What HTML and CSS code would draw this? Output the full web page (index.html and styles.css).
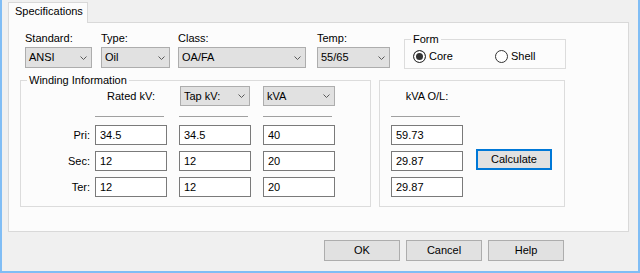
FILE: index.html
```html
<!DOCTYPE html>
<html lang="en">
<head>
  <meta charset="UTF-8">
  <title>Specifications</title>
  <link rel="stylesheet" href="styles.css">
</head>
<body>
  <div class="window">
    <div class="tabs">
      <div class="tab">Specifications</div>
    </div>

    <div class="page">
      <!-- Standard / Type / Class / Temp / Form -->
      <div class="top-row">
        <div class="field f-standard">
          <label>Standard:</label>
          <div class="combo"><span>ANSI</span><svg width="7" height="4"><polyline points="0.5,0.5 3.5,3.5 6.5,0.5"/></svg></div>
        </div>
        <div class="field f-type">
          <label>Type:</label>
          <div class="combo"><span>Oil</span><svg width="7" height="4"><polyline points="0.5,0.5 3.5,3.5 6.5,0.5"/></svg></div>
        </div>
        <div class="field f-class">
          <label>Class:</label>
          <div class="combo"><span>OA/FA</span><svg width="7" height="4"><polyline points="0.5,0.5 3.5,3.5 6.5,0.5"/></svg></div>
        </div>
        <div class="field f-temp">
          <label>Temp:</label>
          <div class="combo"><span>55/65</span><svg width="7" height="4"><polyline points="0.5,0.5 3.5,3.5 6.5,0.5"/></svg></div>
        </div>
        <fieldset class="group form-group">
          <legend>Form</legend>
          <div class="radios">
            <label class="radio core"><span class="circle checked"></span>Core</label>
            <label class="radio"><span class="circle"></span>Shell</label>
          </div>
        </fieldset>
      </div>

      <div class="lower-row">
        <!-- Winding Information -->
        <fieldset class="group winding">
          <legend>Winding Information</legend>
          <div class="grid">
            <div class="head c2">Rated kV:</div>
            <div class="combo tap"><span>Tap kV:</span><svg width="7" height="4"><polyline points="0.5,0.5 3.5,3.5 6.5,0.5"/></svg></div>
            <div class="combo kva"><span>kVA</span><svg width="7" height="4"><polyline points="0.5,0.5 3.5,3.5 6.5,0.5"/></svg></div>

            <div class="rule c2"></div>
            <div class="rule"></div>
            <div class="rule"></div>

            <div class="row-label">Pri:</div>
            <input class="tb" type="text" value="34.5">
            <input class="tb" type="text" value="34.5">
            <input class="tb" type="text" value="40">

            <div class="row-label">Sec:</div>
            <input class="tb" type="text" value="12">
            <input class="tb" type="text" value="12">
            <input class="tb" type="text" value="20">

            <div class="row-label">Ter:</div>
            <input class="tb" type="text" value="12">
            <input class="tb" type="text" value="12">
            <input class="tb" type="text" value="20">
          </div>
        </fieldset>

        <!-- Overload -->
        <fieldset class="group overload">
          <div class="grid">
            <div class="head">kVA O/L:</div>
            <div class="rule c1"></div>
            <input class="tb c1" type="text" value="59.73">
            <input class="tb c1" type="text" value="29.87">
            <input class="tb c1" type="text" value="29.87">
            <button class="btn calc" type="button">Calculate</button>
          </div>
        </fieldset>
      </div>
    </div>

    <div class="buttons">
      <button class="btn" type="button">OK</button>
      <button class="btn" type="button">Cancel</button>
      <button class="btn" type="button">Help</button>
    </div>
  </div>
</body>
</html>
```

FILE: styles.css
```css
* {
  box-sizing: border-box;
}
body {
  margin: 0;
  font-family: "Liberation Sans", Arial, sans-serif;
  font-size: 11px;
  line-height: 13px;
  color: #000;
  background: #f0f0f0;
}
.window {
  width: 640px;
  height: 273px;
  overflow: hidden;
  background: #f0f0f0;
  border: 2px solid #80bdf5;
  border-top: none;
}
.tabs {
  display: flex;
  padding: 2px 0 0 6px;
}
.tab {
  position: relative;
  width: 80px;
  height: 21px;
  margin-bottom: -1px;
  padding: 2px 0 0 6px;
  background: #fcfcfc;
  border: 1px solid #d9d9d9;
  border-bottom: none;
}
.page {
  width: 621px;
  height: 210px;
  margin-left: 6px;
  background: #fcfcfc;
  border: 1px solid #d9d9d9;
}

/* top row */
.top-row {
  display: flex;
  align-items: flex-start;
  padding: 9px 0 0 16px;
}
.field label {
  display: block;
  margin-bottom: 2px;
}
.f-standard { width: 67px; margin-right: 9px; }
.f-type { width: 69px; margin-right: 8px; }
.f-class { width: 128px; margin-right: 11px; }
.f-temp { width: 73px; margin-right: 14px; }

.combo {
  display: flex;
  align-items: center;
  justify-content: space-between;
  height: 21px;
  padding: 0 4px 0 3px;
  background: #e1e1e1;
  border: 1px solid #adadad;
}
.combo svg polyline {
  fill: none;
  stroke: #5a5a5a;
  stroke-width: 1;
}

/* group boxes */
.group {
  margin: 0;
  padding: 0;
  min-width: 0;
  border: 1px solid #dcdcdc;
}
.group legend {
  margin-left: 6px;
  padding: 1px 2px 0;
  line-height: 13px;
}
.form-group {
  width: 162px;
}
.radios {
  display: flex;
  align-items: center;
  height: 14px;
  margin: 3px 0 5px;
  padding-left: 8px;
}
.radio {
  display: flex;
  align-items: center;
}
.radio.core {
  width: 82px;
}
.circle {
  width: 13px;
  height: 13px;
  margin-right: 3px;
  border: 1px solid #333;
  border-radius: 50%;
  background: #fff;
}
.circle.checked {
  background: #333;
  box-shadow: inset 0 0 0 2px #fff;
}

/* lower row */
.lower-row {
  display: flex;
  align-items: flex-start;
  padding: 4px 0 0 11px;
}
.grid {
  display: grid;
  row-gap: 6px;
}
.winding {
  width: 351px;
}
.winding .grid {
  grid-template-columns: 74px 84px 84px 72px;
  margin-top: -1px;
  padding-bottom: 9px;
}
.overload {
  width: 186px;
  margin: 7px 0 0 8px;
  padding: 5px 0 9px 11px;
}
.overload .grid {
  grid-template-columns: 72px 76px;
  column-gap: 13px;
}
.c1 { grid-column: 1; }
.c2 { grid-column: 2; }
.head {
  width: 72px;
  line-height: 20px;
  text-align: center;
}
.combo.tap {
  width: 70px;
  height: 20px;
  margin-left: 1px;
}
.combo.kva {
  width: 72px;
  height: 20px;
}
.rule {
  width: 69px;
  height: 1px;
  margin: 4px 0 2px;
  background: #a0a0a0;
}
.row-label {
  padding-right: 5px;
  line-height: 20px;
  text-align: right;
}
.tb {
  width: 72px;
  height: 20px;
  margin: 0;
  padding: 0 0 0 4px;
  font: inherit;
  color: #000;
  background: #fff;
  border: 1px solid #7a7a7a;
  outline: none;
}

/* buttons */
.btn {
  width: 76px;
  height: 21px;
  margin: 0;
  padding: 0;
  font: inherit;
  color: #000;
  background: #e1e1e1;
  border: 1px solid #adadad;
}
.calc {
  grid-column: 2;
  grid-row: 4;
  margin-top: -2px;
  border: 2px solid #0078d7;
}
.buttons {
  display: flex;
  justify-content: flex-end;
  gap: 6px;
  padding: 8px 74px 0 0;
}
```
